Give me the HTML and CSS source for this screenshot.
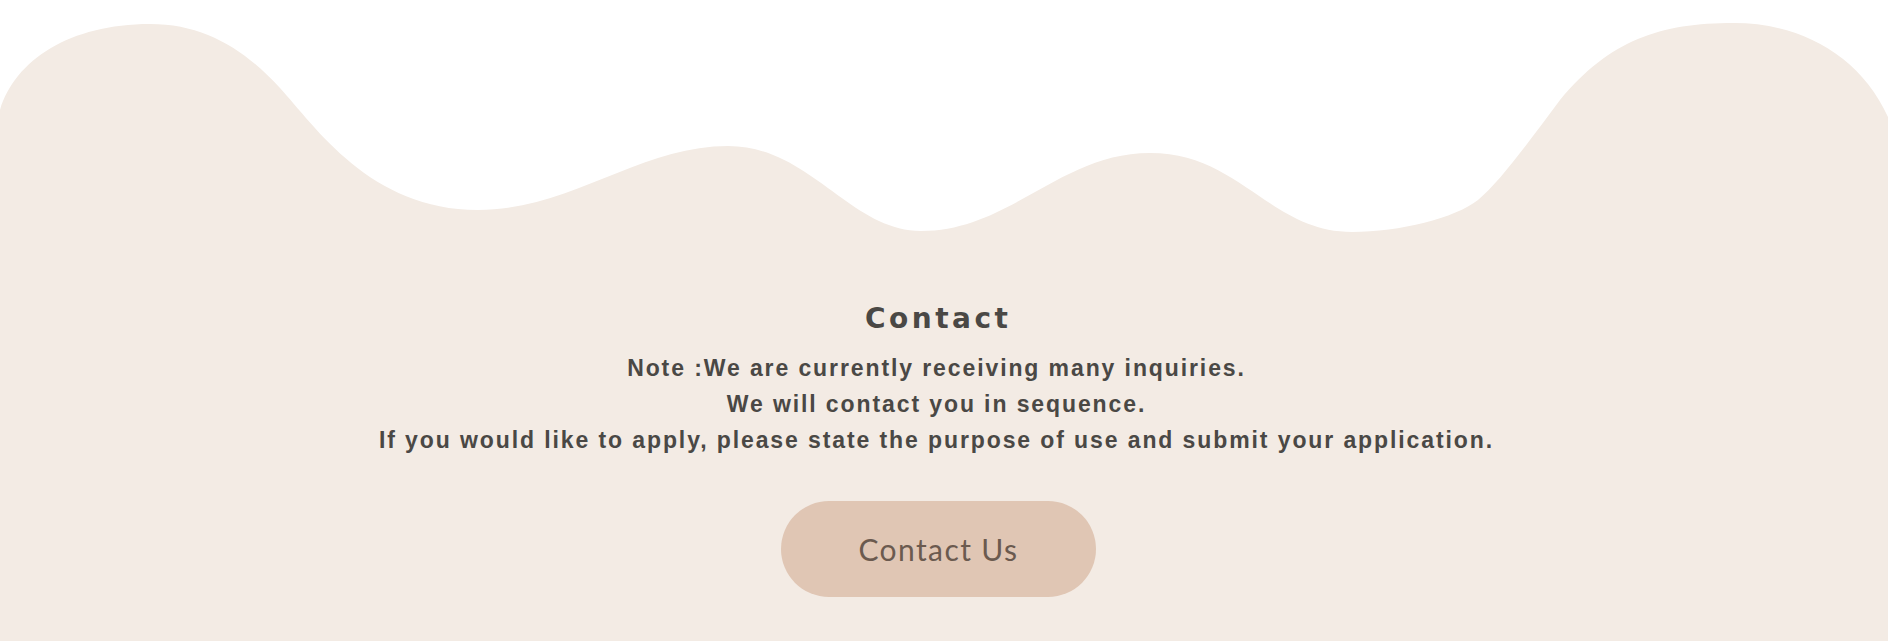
FILE: index.html
```html
<!DOCTYPE html>
<html lang="en">
<head>
<meta charset="utf-8">
<title>Contact</title>
<link rel="stylesheet" href="styles.css">
</head>
<body>
<section class="contact">
  <svg class="wave" viewBox="0 0 1888 240" preserveAspectRatio="none" aria-hidden="true">
    <path d="M0,110 C15,60 70,24 150,24 C205,24 245,50 280,88 C315,126 370,210 478,210 C570,210 640,146 728,146 C810,146 850,231 921,231 C1010,231 1060,153 1150,153 C1240,153 1270,232 1352,232 C1400,232 1455,218 1478,200 C1500,182 1530,140 1560,100 C1610,40 1660,23 1734,23 C1800,23 1860,55 1888,117 L1888,240 L0,240 Z"/>
  </svg>
  <div class="contact-body">
    <h2 class="contact-title">Contact</h2>
    <p class="contact-note">Note :We are currently receiving many inquiries.<br>We will contact you in sequence.<br>If you would like to apply, please state the purpose of use and submit your application.</p>
    <a class="contact-button" href="#">Contact Us</a>
  </div>
</section>
</body>
</html>
```
FILE: styles.css
```css
html, body {
  margin: 0;
  padding: 0;
  background: #ffffff;
}

.contact {
  display: flex;
  flex-direction: column;
  width: 100%;
}

.wave {
  display: block;
  width: 100%;
  height: 240px;
  fill: #f3ebe4;
}

.contact-body {
  background: #f3ebe4;
  height: 401px;
  box-sizing: border-box;
  padding-top: 61px;
  padding-right: 15px;
  display: flex;
  flex-direction: column;
  align-items: center;
  text-align: center;
}

.contact-title {
  margin: 0;
  font-family: "DejaVu Sans", sans-serif;
  font-weight: 700;
  font-size: 28px;
  line-height: 36px;
  letter-spacing: 3.5px;
  padding-left: 3.5px;
  color: #4a4845;
}

.contact-note {
  margin: 13px 0 0;
  font-family: "Liberation Sans", Arial, sans-serif;
  font-weight: 700;
  font-size: 23px;
  line-height: 36px;
  letter-spacing: 1.9px;
  color: #4a4845;
}

.contact-button {
  margin-top: 43px;
  margin-left: 4px;
  width: 315px;
  height: 96px;
  border-radius: 48px;
  background: #e0c6b4;
  display: flex;
  align-items: center;
  justify-content: center;
  font-family: Lato, "Noto Sans", sans-serif;
  font-size: 30px;
  letter-spacing: 1.4px;
  color: #6b5a4f;
  text-decoration: none;
}
```
